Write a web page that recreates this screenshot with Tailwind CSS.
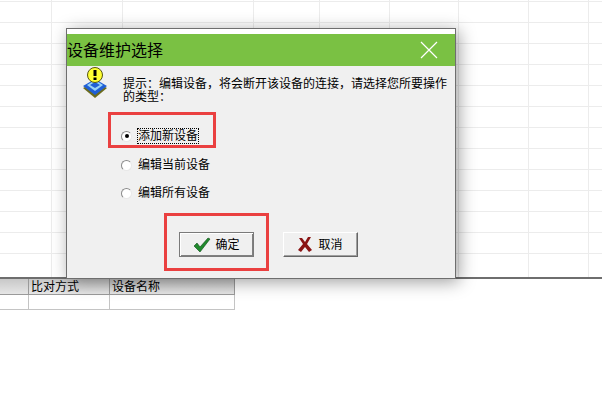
<!DOCTYPE html>
<html lang="en">
<head>
  <meta charset="UTF-8" />
  <title>设备维护选择</title>
  <script src="https://cdn.jsdelivr.net/npm/@tailwindcss/browser@4"></script>
</head>
<body class="relative w-[602px] h-[404px] overflow-hidden bg-white text-black font-['Liberation_Sans','Noto_Sans_CJK_SC',sans-serif]">
  <!-- sheet behind the dialog -->
  <div class="h-[279px] border-b-2 border-[#6e6e6e]">
    <svg width="602" height="277" class="block" stroke="#ececec" stroke-width="1">
      <path d="M51.5 0V277M122.5 0V277M253.5 0V277M319.5 0V277M389.5 0V277M458.5 0V277M528.5 0V277M588.5 0V277" />
      <path d="M0 1.5H602M0 22.5H602M0 43.5H602M0 64.5H602M0 85.5H602M0 106.5H602M0 127.5H602M0 148.5H602M0 169.5H602M0 190.5H602M0 211.5H602M0 232.5H602M0 253.5H602" />
    </svg>
  </div>
  <div class="grid grid-cols-[29px_81px_125px] w-[235px] text-[12px] leading-[17px]">
    <div class="h-4 bg-gradient-to-b from-[#c8c8c8] to-[#e6e6e6] border-b border-r border-[#9a9a9a]"></div>
    <div class="h-4 pl-[2px] bg-gradient-to-b from-[#c8c8c8] to-[#e6e6e6] border-b border-r border-[#9a9a9a]">比对方式</div>
    <div class="h-4 pl-[2px] bg-gradient-to-b from-[#c8c8c8] to-[#e6e6e6] border-b border-r border-[#9a9a9a]">设备名称</div>
    <div class="h-[15px] border-b border-r border-[#c4c4c4]"></div>
    <div class="h-[15px] border-b border-r border-[#c4c4c4]"></div>
    <div class="h-[15px] border-b border-r border-[#c4c4c4]"></div>
  </div>

  <!-- dialog -->
  <div class="absolute left-[66px] top-[28px] w-[390px] h-[251px] bg-[#f0f0f0] border border-[#6e6e6e] shadow-[3px_3px_16px_rgba(0,0,0,0.38)]">
    <div class="h-[5px] bg-white"></div>
    <div class="flex h-8 items-center justify-between bg-[#7ac143] pr-[17px]">
      <span class="pt-[2px] text-[16px]">设备维护选择</span>
      <svg width="18" height="18" viewBox="0 0 18 18" stroke="#fff" stroke-width="1.2" fill="none"><path d="M1 1L17 17M17 1L1 17" /></svg>
    </div>

    <div class="flex items-start pl-[16px] pt-[1px]">
      <svg width="24" height="32" viewBox="0 0 24 32" class="shrink-0">
        <path d="M0 21L12 15L24 21L12 31Z" fill="#6b6b1e" />
        <path d="M0 19L12 12L24 19L12 28Z" fill="#1f5fd6" />
        <path d="M4 18L12 13L20 18L12 24Z" fill="#9ad4f5" />
        <path d="M7 18L12 15L17 18L12 21Z" fill="#1f5fd6" />
        <circle cx="12" cy="8" r="7.5" fill="#ffff33" stroke="#55550f" />
        <rect x="10.5" y="3" width="3" height="6" fill="#000" />
        <rect x="10.5" y="10.5" width="3" height="2.5" fill="#000" />
      </svg>
      <p class="ml-[16px] mt-[11px] w-[325px] text-[12px] leading-[13px]">提示：编辑设备，将会断开该设备的连接，请选择您所要操作的类型：</p>
    </div>

    <div class="flex flex-col pl-[54px] text-[12px] leading-[14px]">
      <label class="mt-[25px] flex h-[14px] items-center gap-[6px]">
        <span class="flex size-[11px] items-center justify-center rounded-full border border-t-[#8a8a8a] border-l-[#8a8a8a] border-r-[#e8e8e8] border-b-[#e8e8e8] bg-white"><span class="size-[4px] rounded-full bg-black"></span></span>
        <span class="outline-1 outline-dotted outline-black">添加新设备</span>
      </label>
      <label class="mt-[15px] flex h-[14px] items-center gap-[6px]">
        <span class="size-[11px] rounded-full border border-t-[#8a8a8a] border-l-[#8a8a8a] border-r-[#e8e8e8] border-b-[#e8e8e8] bg-white"></span>
        <span>编辑当前设备</span>
      </label>
      <label class="mt-[14px] flex h-[14px] items-center gap-[6px]">
        <span class="size-[11px] rounded-full border border-t-[#8a8a8a] border-l-[#8a8a8a] border-r-[#e8e8e8] border-b-[#e8e8e8] bg-white"></span>
        <span>编辑所有设备</span>
      </label>
    </div>

    <div class="mt-[32px] ml-[112px] flex gap-[29px] text-[12px]">
      <button class="flex h-[25px] w-[75px] items-center justify-center gap-[4px] border border-[#7a7a7a] bg-[#f0f0f0] shadow-[inset_1px_1px_0_#fff,inset_-1px_-1px_0_#808080]">
        <svg width="18" height="16" viewBox="0 0 18 16"><path d="M1 9L4 6L7 10L15 1L17 2L7 15Z" fill="#1f8a2c" stroke="#0d4a16" stroke-width="0.6" /></svg>
        <span>确定</span>
      </button>
      <button class="flex h-[25px] w-[75px] items-center justify-center gap-[6px] border border-t-white border-l-white border-r-[#666] border-b-[#666] bg-[#f0f0f0] shadow-[inset_-1px_-1px_0_#a0a0a0]">
        <svg width="14" height="15" viewBox="0 0 14 15"><path d="M1 1H4L7 5L10 0H13L9 7L14 13L11 15L7 10L3 15L0 13L5 7Z" fill="#8a1414" /></svg>
        <span>取消</span>
      </button>
    </div>
  </div>

  <!-- annotation boxes -->
  <div class="absolute left-[108px] top-[112px] h-[36px] w-[108px] border-[3px] border-[#ea4040]"></div>
  <div class="absolute left-[164px] top-[213px] h-[58px] w-[105px] border-[3px] border-[#ea4040]"></div>
</body>
</html>
